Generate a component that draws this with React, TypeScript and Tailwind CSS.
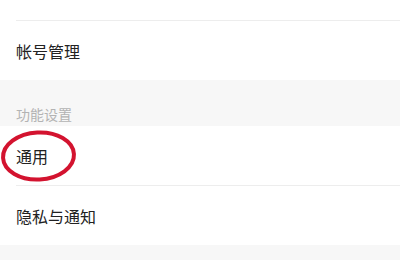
import React from "react";

const font = { fontFamily: '"Noto Sans CJK SC", "Noto Sans", sans-serif' };

export default function App() {
  return (
    <div className="w-[400px] h-[260px] overflow-hidden bg-[#f7f7f7]" style={font}>
      <div className="bg-white h-[20px]" />
      <div className="bg-white pl-4">
        <div className="h-px bg-[#ededed]" />
      </div>
      <div className="bg-white h-[59px] flex items-center pl-4">
        <span className="text-[16px] text-[#222] leading-none">帐号管理</span>
      </div>
      <div className="h-[46px] bg-[#f7f7f7] flex items-end pl-4 pb-[5px]">
        <span className="text-[14px] text-[#b3b3b3] leading-none">功能设置</span>
      </div>
      <div className="relative bg-white h-[59px] flex items-center pl-4">
        <span className="text-[16px] text-[#222] leading-none">通用</span>
        <svg className="absolute left-0 top-[3px]" width="80" height="56" viewBox="0 0 80 56">
          <ellipse cx="38.5" cy="27" rx="35.5" ry="23.5" fill="none" stroke="#d3132f" strokeWidth="4" transform="rotate(-3 38.5 27)" />
        </svg>
      </div>
      <div className="bg-white pl-4">
        <div className="h-px bg-[#ededed]" />
      </div>
      <div className="bg-white h-[59px] flex items-center pl-4">
        <span className="text-[16px] text-[#222] leading-none">隐私与通知</span>
      </div>
      <div className="h-[16px] bg-[#f7f7f7]" />
    </div>
  );
}
